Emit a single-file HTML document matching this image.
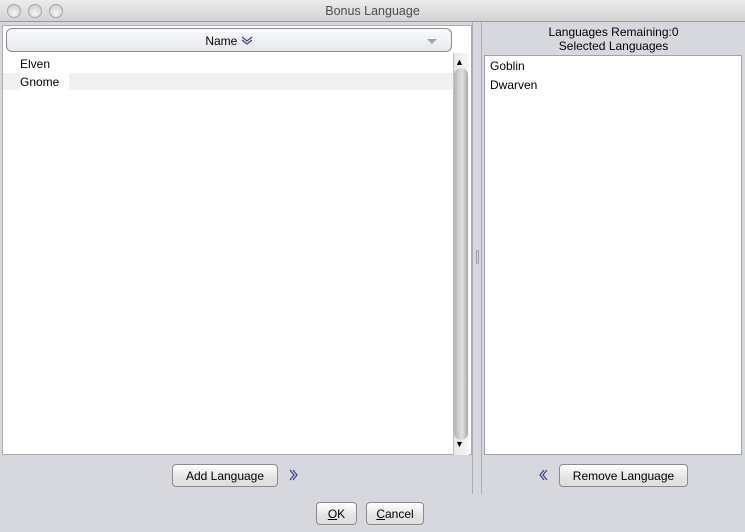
<!DOCTYPE html>
<html><head><style>
*{box-sizing:border-box;margin:0;padding:0}
body{width:745px;height:532px;background:#d6d8de;font-family:"Liberation Sans",sans-serif;font-size:12px;color:#000;position:relative;overflow:hidden}
.abs{position:absolute}
.title{left:0;top:0;width:745px;height:22px;background:linear-gradient(#ececec,#d3d3d3);border-bottom:1px solid #9a9a9a;text-align:center;line-height:23px;color:#4d4d4d;font-size:12.5px}
.dot{top:4px;width:14px;height:14px;border-radius:50%;background:radial-gradient(circle at 50% 70%,#f4f4f4,#c8c8c8);border:1px solid #a6a6a6}
.btn{background:linear-gradient(#ffffff,#e4e4e4 60%,#dedede);border:1px solid #8c8c8c;border-radius:4px;text-align:center;font-size:12px;line-height:22px}
.list{background:#fff;border:1px solid #9fa3aa}
</style></head><body>
<div class="abs title">Bonus Language</div>
<div class="abs dot" style="left:7px"></div>
<div class="abs dot" style="left:28px"></div>
<div class="abs dot" style="left:49px"></div>
<div class="abs" style="left:2px;top:25px;width:470px;height:430px;border:1px solid #a9adb4;background:#fff"></div>
<div class="abs btn" style="left:6px;top:28px;width:446px;height:24px;border-radius:6px;line-height:24px;background:linear-gradient(#fafbfc,#e6e8ec)">Name <svg width="12" height="10" viewBox="0 0 12 10" style="vertical-align:-1px"><path d="M1 1 L6 5 L11 1 M1 4 L6 8 L11 4" fill="none" stroke="#3b3f8f" stroke-width="1.2"/></svg><svg width="10" height="6" style="position:absolute;right:14px;top:10px"><path d="M0 0 L10 0 L5 5 Z" fill="#a0a4aa"/></svg></div>
<div class="abs" style="left:20px;top:57px">Elven</div>
<div class="abs" style="left:3px;top:73px;width:450px;height:17px;background:#f1f1f1"></div>
<div class="abs" style="left:20px;top:73px;width:49px;height:17px;background:#fff;line-height:18px">Gnome</div>
<div class="abs" style="left:453px;top:53px;width:16px;height:402px;background:linear-gradient(90deg,#e8e8e8,#f8f8f8);border-left:1px solid #c0c0c0"></div>
<div class="abs" style="left:455px;top:57px;font-size:9px">&#9650;</div>
<div class="abs" style="left:454px;top:68px;width:14px;height:372px;border-radius:7px;background:linear-gradient(90deg,#b4b4b4,#d4d4d4 40%,#e0e0e0 60%,#aaaaaa)"></div>
<div class="abs" style="left:455px;top:439px;font-size:9px">&#9660;</div>
<div class="abs" style="left:472px;top:22px;width:1px;height:472px;background:#a9adb4"></div>
<div class="abs" style="left:481px;top:22px;width:1px;height:472px;background:#a9adb4"></div>
<div class="abs" style="left:476px;top:250px;width:3px;height:14px;border:1px solid #9a9ea6;border-radius:2px"></div>
<div class="abs" style="left:482px;top:25px;width:263px;text-align:center;line-height:14px">Languages Remaining:0<br>Selected Languages</div>
<div class="abs list" style="left:484px;top:55px;width:258px;height:400px"></div>
<div class="abs" style="left:490px;top:59px">Goblin</div>
<div class="abs" style="left:490px;top:78px">Dwarven</div>
<div class="abs btn" style="left:172px;top:464px;width:106px;height:23px">Add Language</div>
<svg class="abs" style="left:289px;top:469px" width="10" height="12" viewBox="0 0 10 12"><path d="M1 1 L5 6 L1 11 M4 1 L8 6 L4 11" fill="none" stroke="#3b3f8f" stroke-width="1.2"/></svg>
<svg class="abs" style="left:538px;top:469px" width="10" height="12" viewBox="0 0 10 12"><path d="M9 1 L5 6 L9 11 M6 1 L2 6 L6 11" fill="none" stroke="#3b3f8f" stroke-width="1.2"/></svg>
<div class="abs btn" style="left:559px;top:464px;width:129px;height:23px">Remove Language</div>
<div class="abs btn" style="left:316px;top:502px;width:41px;height:23px"><u>O</u>K</div>
<div class="abs btn" style="left:366px;top:502px;width:58px;height:23px"><u>C</u>ancel</div>
</body></html>
